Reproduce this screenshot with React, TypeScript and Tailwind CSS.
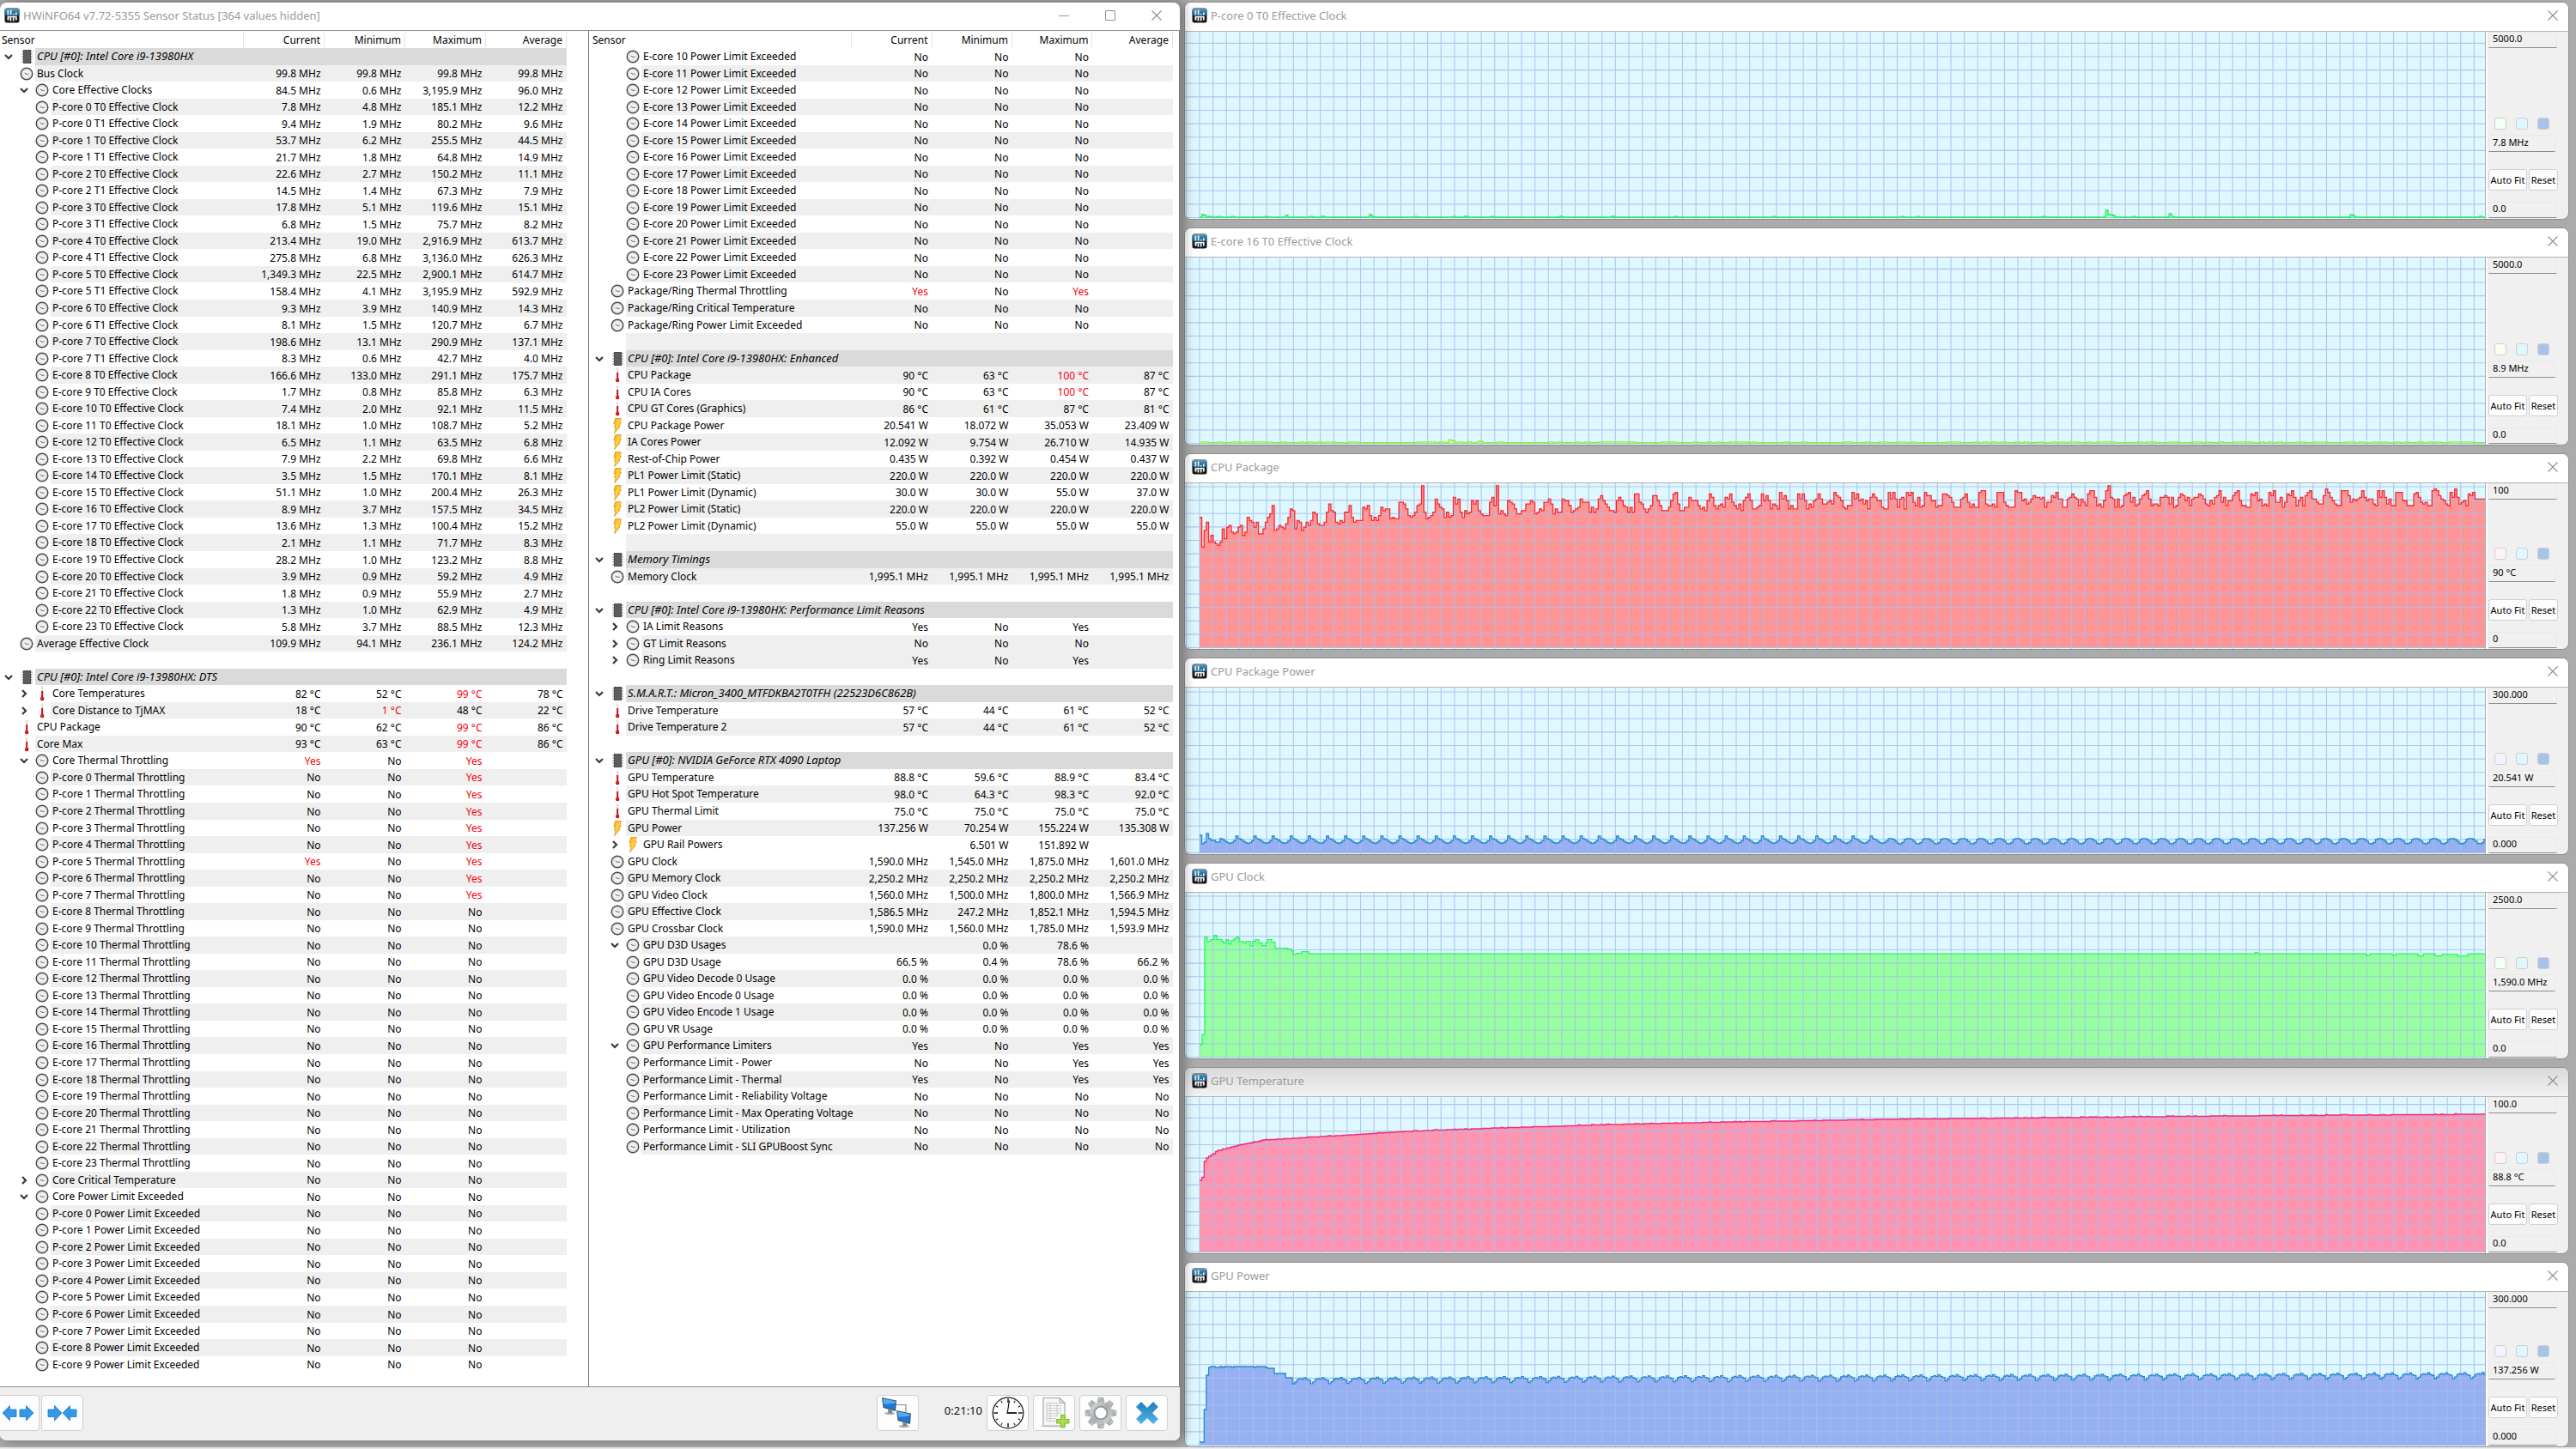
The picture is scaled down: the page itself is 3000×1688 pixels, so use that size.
import React from "react";

type Icon = "clock" | "temp" | "bolt";
type Row = {
  level: 0 | 1 | 2;
  label: string;
  values: string[];
  icon: Icon;
  header?: boolean;
  blank?: boolean;
  toggle?: "open" | "closed";
  hold?: boolean;
};

/* A leading "!" on a value marks it as an alert, drawn in red. */
const row = (level: 1 | 2, icon: Icon, label: string, values: string, extra: Partial<Row> = {}): Row => ({
  level,
  icon,
  label,
  values: values.split("|"),
  ...extra,
});
const head = (label: string): Row => ({ level: 0, icon: "clock", label, values: ["", "", "", ""], header: true, toggle: "open" });
const blank = (): Row => ({ level: 0, icon: "clock", label: "", values: ["", "", "", ""], blank: true });
const mhz = (s: string) => s.split(" ").map((v) => v + " MHz").join("|");

const coreNames = [
  ...Array.from({ length: 8 }, (_, i) => "P-core " + i),
  ...Array.from({ length: 16 }, (_, i) => "E-core " + (i + 8)),
];

const pClocks = [
  "7.8 4.8 185.1 12.2", "9.4 1.9 80.2 9.6", "53.7 6.2 255.5 44.5", "21.7 1.8 64.8 14.9",
  "22.6 2.7 150.2 11.1", "14.5 1.4 67.3 7.9", "17.8 5.1 119.6 15.1", "6.8 1.5 75.7 8.2",
  "213.4 19.0 2,916.9 613.7", "275.8 6.8 3,136.0 626.3", "1,349.3 22.5 2,900.1 614.7", "158.4 4.1 3,195.9 592.9",
  "9.3 3.9 140.9 14.3", "8.1 1.5 120.7 6.7", "198.6 13.1 290.9 137.1", "8.3 0.6 42.7 4.0",
];
const eClocks = [
  "166.6 133.0 291.1 175.7", "1.7 0.8 85.8 6.3", "7.4 2.0 92.1 11.5", "18.1 1.0 108.7 5.2",
  "6.5 1.1 63.5 6.8", "7.9 2.2 69.8 6.6", "3.5 1.5 170.1 8.1", "51.1 1.0 200.4 26.3",
  "8.9 3.7 157.5 34.5", "13.6 1.3 100.4 15.2", "2.1 1.1 71.7 8.3", "28.2 1.0 123.2 8.8",
  "3.9 0.9 59.2 4.9", "1.8 0.9 55.9 2.7", "1.3 1.0 62.9 4.9", "5.8 3.7 88.5 12.3",
];

const leftRows: Row[] = [
  head("CPU [#0]: Intel Core i9-13980HX"),
  row(1, "clock", "Bus Clock", mhz("99.8 99.8 99.8 99.8")),
  row(2, "clock", "Core Effective Clocks", mhz("84.5 0.6 3,195.9 96.0"), { toggle: "open" }),
  ...pClocks.map((v, i) => row(2, "clock", `P-core ${i >> 1} T${i % 2} Effective Clock`, mhz(v))),
  ...eClocks.map((v, i) => row(2, "clock", `E-core ${i + 8} T0 Effective Clock`, mhz(v))),
  row(1, "clock", "Average Effective Clock", mhz("109.9 94.1 236.1 124.2")),
  blank(),
  head("CPU [#0]: Intel Core i9-13980HX: DTS"),
  row(2, "temp", "Core Temperatures", "82 °C|52 °C|!99 °C|78 °C", { toggle: "closed" }),
  row(2, "temp", "Core Distance to TjMAX", "18 °C|!1 °C|48 °C|22 °C", { toggle: "closed" }),
  row(1, "temp", "CPU Package", "90 °C|62 °C|!99 °C|86 °C"),
  row(1, "temp", "Core Max", "93 °C|63 °C|!99 °C|86 °C"),
  row(2, "clock", "Core Thermal Throttling", "!Yes|No|!Yes|", { toggle: "open" }),
  ...coreNames.map((n, i) =>
    row(2, "clock", n + " Thermal Throttling", i === 5 ? "!Yes|No|!Yes|" : i < 8 ? "No|No|!Yes|" : "No|No|No|"),
  ),
  row(2, "clock", "Core Critical Temperature", "No|No|No|", { toggle: "closed" }),
  row(2, "clock", "Core Power Limit Exceeded", "No|No|No|", { toggle: "open" }),
  ...coreNames.slice(0, 10).map((n) => row(2, "clock", n + " Power Limit Exceeded", "No|No|No|")),
];

const rightRows: Row[] = [
  ...coreNames.slice(10).map((n) => row(2, "clock", n + " Power Limit Exceeded", "No|No|No|")),
  row(1, "clock", "Package/Ring Thermal Throttling", "!Yes|No|!Yes|"),
  row(1, "clock", "Package/Ring Critical Temperature", "No|No|No|"),
  row(1, "clock", "Package/Ring Power Limit Exceeded", "No|No|No|"),
  blank(),
  head("CPU [#0]: Intel Core i9-13980HX: Enhanced"),
  row(1, "temp", "CPU Package", "90 °C|63 °C|!100 °C|87 °C"),
  row(1, "temp", "CPU IA Cores", "90 °C|63 °C|!100 °C|87 °C"),
  row(1, "temp", "CPU GT Cores (Graphics)", "86 °C|61 °C|87 °C|81 °C"),
  row(1, "bolt", "CPU Package Power", "20.541 W|18.072 W|35.053 W|23.409 W"),
  row(1, "bolt", "IA Cores Power", "12.092 W|9.754 W|26.710 W|14.935 W"),
  row(1, "bolt", "Rest-of-Chip Power", "0.435 W|0.392 W|0.454 W|0.437 W"),
  row(1, "bolt", "PL1 Power Limit (Static)", "220.0 W|220.0 W|220.0 W|220.0 W"),
  row(1, "bolt", "PL1 Power Limit (Dynamic)", "30.0 W|30.0 W|55.0 W|37.0 W"),
  row(1, "bolt", "PL2 Power Limit (Static)", "220.0 W|220.0 W|220.0 W|220.0 W"),
  row(1, "bolt", "PL2 Power Limit (Dynamic)", "55.0 W|55.0 W|55.0 W|55.0 W"),
  blank(),
  head("Memory Timings"),
  row(1, "clock", "Memory Clock", mhz("1,995.1 1,995.1 1,995.1 1,995.1")),
  blank(),
  head("CPU [#0]: Intel Core i9-13980HX: Performance Limit Reasons"),
  row(2, "clock", "IA Limit Reasons", "Yes|No|Yes|", { toggle: "closed" }),
  row(2, "clock", "GT Limit Reasons", "No|No|No|", { toggle: "closed" }),
  row(2, "clock", "Ring Limit Reasons", "Yes|No|Yes|", { toggle: "closed", hold: true }),
  blank(),
  head("S.M.A.R.T.: Micron_3400_MTFDKBA2T0TFH (22523D6C862B)"),
  row(1, "temp", "Drive Temperature", "57 °C|44 °C|61 °C|52 °C"),
  row(1, "temp", "Drive Temperature 2", "57 °C|44 °C|61 °C|52 °C"),
  blank(),
  head("GPU [#0]: NVIDIA GeForce RTX 4090 Laptop"),
  row(1, "temp", "GPU Temperature", "88.8 °C|59.6 °C|88.9 °C|83.4 °C"),
  row(1, "temp", "GPU Hot Spot Temperature", "98.0 °C|64.3 °C|98.3 °C|92.0 °C"),
  row(1, "temp", "GPU Thermal Limit", "75.0 °C|75.0 °C|75.0 °C|75.0 °C"),
  row(1, "bolt", "GPU Power", "137.256 W|70.254 W|155.224 W|135.308 W"),
  row(2, "bolt", "GPU Rail Powers", "|6.501 W|151.892 W|", { toggle: "closed" }),
  row(1, "clock", "GPU Clock", mhz("1,590.0 1,545.0 1,875.0 1,601.0"), { hold: true }),
  row(1, "clock", "GPU Memory Clock", mhz("2,250.2 2,250.2 2,250.2 2,250.2")),
  row(1, "clock", "GPU Video Clock", mhz("1,560.0 1,500.0 1,800.0 1,566.9")),
  row(1, "clock", "GPU Effective Clock", mhz("1,586.5 247.2 1,852.1 1,594.5")),
  row(1, "clock", "GPU Crossbar Clock", mhz("1,590.0 1,560.0 1,785.0 1,593.9")),
  row(2, "clock", "GPU D3D Usages", "|0.0 %|78.6 %|", { toggle: "open" }),
  row(2, "clock", "GPU D3D Usage", "66.5 %|0.4 %|78.6 %|66.2 %"),
  row(2, "clock", "GPU Video Decode 0 Usage", "0.0 %|0.0 %|0.0 %|0.0 %"),
  row(2, "clock", "GPU Video Encode 0 Usage", "0.0 %|0.0 %|0.0 %|0.0 %"),
  row(2, "clock", "GPU Video Encode 1 Usage", "0.0 %|0.0 %|0.0 %|0.0 %"),
  row(2, "clock", "GPU VR Usage", "0.0 %|0.0 %|0.0 %|0.0 %"),
  row(2, "clock", "GPU Performance Limiters", "Yes|No|Yes|Yes", { toggle: "open" }),
  row(2, "clock", "Performance Limit - Power", "No|No|Yes|Yes"),
  row(2, "clock", "Performance Limit - Thermal", "Yes|No|Yes|Yes"),
  row(2, "clock", "Performance Limit - Reliability Voltage", "No|No|No|No"),
  row(2, "clock", "Performance Limit - Max Operating Voltage", "No|No|No|No"),
  row(2, "clock", "Performance Limit - Utilization", "No|No|No|No"),
  row(2, "clock", "Performance Limit - SLI GPUBoost Sync", "No|No|No|No"),
];

/* ---------- small icons ---------- */

function AppIcon() {
  return (
    <svg viewBox="0 0 18 18" className="size-[18px] shrink-0" aria-hidden="true">
      <defs>
        <linearGradient id="appTop" x1="0" y1="0" x2="0" y2="1">
          <stop offset="0" stopColor="#7f99a6" />
          <stop offset="0.5" stopColor="#2c7ba6" />
          <stop offset="1" stopColor="#0c5f93" />
        </linearGradient>
      </defs>
      <rect x="0.5" y="0.5" width="17" height="17" rx="2.5" fill="#15181b" />
      <path d="M0.5 9V3a2.5 2.5 0 0 1 2.5-2.5h12A2.5 2.5 0 0 1 17.500 3v6z" fill="url(#appTop)" />
      <path d="M3.500 3h1.700v5.500H3.500zM6.800 2.500h1.700v6H6.800zM10 7h1.700v1.500H10zM13 5.500h1.700v3H13z" fill="#e6f2f8" />
      <path d="M3.500 9.700h11.200v1.500H3.500zM3.500 11h2v3.500h-2zM6.600 11h1.700v4.500H6.600zM9.800 11h1.700v4.500H9.800zM12.900 11h1.800v3.500h-1.800z" fill="#f6f6f6" />
    </svg>
  );
}

function ClockIcon() {
  return (
    <svg viewBox="0 0 16 16" className="size-4 shrink-0" aria-hidden="true">
      <circle cx="8" cy="8" r="6.800" fill="#f1f1f1" stroke="#4a4a4a" strokeWidth="1.400" />
      <circle cx="8" cy="8" r="5.400" fill="none" stroke="#c9c9c9" strokeWidth="0.900" />
      <path d="M8.300 8.500 5.600 7M8 8.300h2.600" stroke="#6b5a5a" strokeWidth="0.900" fill="none" />
    </svg>
  );
}

function TempIcon() {
  return (
    <svg viewBox="0 0 16 18" className="h-[18px] w-4 shrink-0" aria-hidden="true">
      <rect x="6.900" y="0.500" width="2.400" height="14" rx="1.200" fill="#dedede" />
      <rect x="7.200" y="6" width="1.900" height="9" fill="#c80f14" />
      <circle cx="8.100" cy="15" r="2.300" fill="#c80f14" />
      <circle cx="7.500" cy="14.500" r="0.700" fill="#ee7a7a" />
    </svg>
  );
}

function BoltIcon() {
  return (
    <svg viewBox="0 0 16 18" className="h-[18px] w-4 shrink-0" aria-hidden="true">
      <defs>
        <linearGradient id="bolt" x1="0" y1="0" x2="1" y2="1">
          <stop offset="0" stopColor="#ff9f10" />
          <stop offset="0.500" stopColor="#ffd83a" />
          <stop offset="1" stopColor="#f08c0a" />
        </linearGradient>
      </defs>
      <path d="M5.600 0.600h6.800l-1.600 4.600 1.500 0.300-2.500 4.200 1.100 0.300L4.600 17.700l1.500-6.200-1.600-0.300 1.100-4-1.700-0.400z" fill="url(#bolt)" stroke="#dd7f14" strokeWidth="0.700" />
    </svg>
  );
}

function ChipIcon() {
  return (
    <svg viewBox="0 0 16 18" className="h-[18px] w-4 shrink-0" aria-hidden="true">
      <path d="M2.500 3h12M2.500 6h12M2.500 9h12M2.500 12h12M2.500 15h12" stroke="#8d8d8d" strokeWidth="1.300" />
      <rect x="4" y="1" width="9" height="16" fill="#4e4e4e" />
      <rect x="5" y="2" width="7" height="14" fill="#5d5d5d" />
    </svg>
  );
}

function Chevron({ kind }: { kind: "open" | "closed" }) {
  return (
    <svg viewBox="0 0 10 10" className="size-2.5" aria-hidden="true">
      <path d={kind === "open" ? "M1 3l4 4 4-4" : "M3 1l4 4-4 4"} fill="none" stroke="#3a3a3a" strokeWidth="2.200" />
    </svg>
  );
}

function CloseGlyph() {
  return (
    <svg viewBox="0 0 12 12" className="size-3" aria-hidden="true">
      <path d="M0.500 0.500l11 11M11.500 0.500l-11 11" stroke="#8f8f8f" strokeWidth="1.100" fill="none" />
    </svg>
  );
}

/* ---------- sensor tables ---------- */

const lineIcon = { clock: <ClockIcon />, temp: <TempIcon />, bolt: <BoltIcon /> };

function SensorTable({ rows, wide, name }: { rows: Row[]; wide: boolean; name: string }) {
  let shaded = true;
  return (
    <table aria-label={name} className="w-full table-fixed border-collapse text-xs leading-[19px] text-black">
      <colgroup>
        <col className={wide ? "w-[43%]" : "w-[44.8%]"} />
        <col />
        <col />
        <col />
        <col />
      </colgroup>
      <thead>
        <tr className="h-5">
          <th scope="col" className="border-r border-[#e4e4e4] p-0 pl-0.5 text-left font-normal">
            Sensor
          </th>
          {["Current", "Minimum", "Maximum", "Average"].map((c) => (
            <th key={c} scope="col" className="border-r border-[#e4e4e4] p-0 pr-1 text-right font-normal">
              {c}
            </th>
          ))}
        </tr>
      </thead>
      <tbody>
        {rows.map((r, i) => {
          if (!r.hold) shaded = !shaded;
          const bg = r.header ? "bg-[#dadada]" : shaded ? "bg-[#efefef]" : "bg-white";
          const h = (i % 15) % 2 === 0 ? "h-5" : "h-[19px]";
          return (
            <tr key={i} className={h}>
              <td className="p-0">
                <div className={`flex items-center ${h}`}>
                  <div className={`flex shrink-0 items-center ${r.level === 2 ? "w-[59px] pl-[23px]" : "w-[41px] pl-[5px]"}`}>
                    <span className="mr-2 flex w-2.5 shrink-0">
                      {r.toggle && (
                        <button type="button" className="flex" aria-label={(r.toggle === "open" ? "Collapse " : "Expand ") + r.label}>
                          <Chevron kind={r.toggle} />
                        </button>
                      )}
                    </span>
                    {r.header ? <ChipIcon /> : r.blank ? null : lineIcon[r.icon]}
                  </div>
                  <div className={`min-w-0 flex-1 whitespace-nowrap pl-0.5 ${h} ${bg} ${r.header ? "text-[13px] italic" : ""}`}>{r.label}</div>
                </div>
              </td>
              {r.values.map((v, c) => (
                <td key={c} className={`whitespace-nowrap p-0 pr-1 text-right ${bg} ${v[0] === "!" ? "text-[#f5000c]" : ""}`}>
                  {v.replace("!", "")}
                </td>
              ))}
            </tr>
          );
        })}
      </tbody>
    </table>
  );
}

/* ---------- toolbar ---------- */

function ToolButton({ label, children, wide }: { label: string; children: React.ReactNode; wide?: boolean }) {
  return (
    <button
      type="button"
      aria-label={label}
      className={`flex h-[42px] items-center justify-center border border-[#d0d0d0] bg-[#fdfdfd] ${wide ? "w-[46px] rounded-r border-l-0 pr-1" : "w-[49px] rounded"}`}
    >
      {children}
    </button>
  );
}

const arrowLeft = "M1 10 9.500 1.500V6H17v8.500H9.500V19z";
const arrowRight = "M19 10 10.500 1.500V6H3v8.500h7.500V19z";

function Arrows({ outward }: { outward: boolean }) {
  return (
    <svg viewBox="0 0 38 20" className="h-5 w-[38px]" aria-hidden="true">
      <g fill="#3498e8" stroke="#1c7bca" strokeWidth="0.800">
        <path d={outward ? arrowLeft : arrowRight} transform={outward ? "translate(0 0)" : "translate(-1 0)"} />
        <path d={outward ? arrowRight : arrowLeft} transform="translate(18 0)" />
      </g>
    </svg>
  );
}

function Monitor({ x, y }: { x: number; y: number }) {
  return (
    <g transform={`translate(${x} ${y})`}>
      <ellipse cx="9" cy="18.500" rx="6" ry="1.800" fill="#b5b9bd" />
      <path d="M7 14l5 1 .5 3.500H7.500z" fill="#7f858a" />
      <path d="M0 0 17 3.500 16 16 1.500 12z" fill="#44525f" />
      <path d="M1.200 1.300 15.800 4.300 15 14.500 2.500 11z" fill="#1b78d8" />
      <path d="M1.200 1.300 15.800 4.300 15.600 6.500 2 8z" fill="#56a8f0" />
    </g>
  );
}

function NetworkIcon() {
  return (
    <svg viewBox="0 0 38 38" className="size-[38px]" aria-hidden="true">
      <path d="M17 9.500h12V18" fill="none" stroke="#8a8a8a" strokeWidth="1.200" />
      <Monitor x={1} y={1} />
      <Monitor x={18} y={16} />
    </svg>
  );
}

function WallClockIcon() {
  return (
    <svg viewBox="0 0 38 38" className="size-[38px]" aria-hidden="true">
      <circle cx="19" cy="19" r="17.800" fill="#fff" stroke="#222" strokeWidth="1.300" />
      {Array.from({ length: 12 }, (_, i) => (
        <path key={i} d={i % 3 === 0 ? "M19 2.500v4.500" : "M19 2.500v3"} stroke="#111" strokeWidth={i % 3 === 0 ? 1.500 : 1} transform={`rotate(${i * 30} 19 19)`} />
      ))}
      <path d="M18 20 20.500 4.500" stroke="#111" strokeWidth="1.200" />
      <path d="M18 19h11" stroke="#111" strokeWidth="1.800" />
    </svg>
  );
}

function ReportIcon() {
  return (
    <svg viewBox="0 0 38 38" className="size-[38px]" aria-hidden="true">
      <ellipse cx="18" cy="34.500" rx="16" ry="1.500" fill="#e2e2e2" />
      <path d="M6 1.500h19l6 6V34H6z" fill="#f7f7f7" stroke="#a2a2a2" strokeWidth="1.100" />
      <path d="M25 1.500v6h6z" fill="#e2e2e2" stroke="#a2a2a2" strokeWidth="0.900" />
      <path d="M10 7.500h12M10 10.500h17M10 13.500h17M10 16.500h17M10 19.500h17M10 22.500h13M10 25.500h11M10 28.500h11M10 7.500v21M14 7.500v21M22 7.500v15" stroke="#c6c6c6" strokeWidth="0.900" fill="none" />
      <path d="M26.500 21.500h4.500v5h5v4.500h-5v5h-4.500v-5h-5v-4.500h5z" fill="#a8dc4e" stroke="#7fb62c" strokeWidth="1" />
    </svg>
  );
}

function GearIcon() {
  return (
    <svg viewBox="0 0 38 38" className="size-[38px]" aria-hidden="true">
      <defs>
        <linearGradient id="gear" x1="0" y1="0" x2="1" y2="1">
          <stop offset="0" stopColor="#dfe1e2" />
          <stop offset="0.500" stopColor="#a9adaf" />
          <stop offset="1" stopColor="#d9dbdc" />
        </linearGradient>
      </defs>
      <g fill="url(#gear)" stroke="#8f9396" strokeWidth="0.700">
        {Array.from({ length: 8 }, (_, i) => (
          <path key={i} d="M14.800 8.500 16.200 1.200h5.600L23.200 8.500z" transform={`rotate(${i * 45} 19 19)`} />
        ))}
      </g>
      <circle cx="19" cy="19" r="12.800" fill="url(#gear)" />
      <circle cx="19" cy="19" r="8" fill="#8d9193" />
      <circle cx="19" cy="19" r="6.500" fill="#fdfdfd" />
    </svg>
  );
}

function BigCross() {
  return (
    <svg viewBox="0 0 28 28" className="size-7" aria-hidden="true">
      <defs>
        <linearGradient id="cross" x1="0" y1="0" x2="0" y2="1">
          <stop offset="0" stopColor="#1c7fb8" />
          <stop offset="1" stopColor="#54b4ec" />
        </linearGradient>
      </defs>
      <path d="M7 1l7 7 7-7 6 6-7 7 7 7-6 6-7-7-7 7-6-6 7-7-7-7z" fill="url(#cross)" />
    </svg>
  );
}

/* ---------- graph windows ---------- */

/* Series are step samples in a 1498-unit wide strip; heights use the strip's own scale. */
const STRIP = 1498;
type Point = [number, number];

const noise = (n: number) => {
  const s = Math.sin(n * 127.1 + 11.7) * 43758.5453;
  return s - Math.floor(s);
};
const lerp = (pts: Point[], x: number) => {
  for (let i = 1; i < pts.length; i++) {
    if (x <= pts[i][0]) {
      const [x0, y0] = pts[i - 1];
      const [x1, y1] = pts[i];
      return y0 + ((y1 - y0) * (x - x0)) / (x1 - x0);
    }
  }
  return pts[pts.length - 1][1];
};
const sample = (f: (x: number, i: number) => number, step = 2.64): Point[] =>
  Array.from({ length: Math.ceil(STRIP / step) }, (_, i) => [i * step, f(i * step, i)] as Point);

const pCore = sample((x, i) => {
  const spikes: Point[] = [[3, 4], [6, 3], [100, 3], [142, 2], [198, 4], [201, 2], [310, 2], [420, 2], [480, 2], [1055, 9], [1060, 4], [1063, 3], [1130, 5], [1342, 4], [1344, 3], [1491, 2]];
  const hit = spikes.find((s) => Math.abs(s[0] - x) < 1.5);
  return hit ? hit[1] : noise(i) > 0.98 ? 1.800 : 1;
});
const eCore = sample((x, i) => (x > 290 && x < 298 ? 5 - (x - 290) / 3 : x > 324 && x < 329 ? 3 : noise(i >> 1) > 0.600 ? 2.200 : 1.400));

const cpuLead = [79, 61, 71, 76, 64, 68, 64, 63, 62, 64, 72, 66, 73, 74, 70, 69, 70, 73, 74, 68, 70, 79, 77, 76, 73, 76, 69, 69, 72, 76, 79, 81, 86, 71, 72, 74, 73, 72, 75, 79, 84, 83, 72, 77, 76, 71, 73, 76, 74, 77, 82, 81, 75, 74, 74, 76];
const cpuTemp = sample((x, i) => {
  if (i < cpuLead.length) return cpuLead[i];
  const base = lerp([[140, 74.500], [380, 81], [700, 84], [1498, 86]], x);
  const peak = lerp([[140, 87], [300, 91], [700, 95], [1498, 96]], x);
  const phase = (i % 8) / 8;
  const n = noise(i);
  const crest = phase < 0.375 ? 0.500 + n * 0.500 : phase < 0.500 ? 0.250 + n * 0.400 : n * n * (x > 700 ? 0.600 : 0.350);
  const v = base + (peak - base) * crest;
  if (i === 98 || i === 131 || i === 401) return 98;
  return i > 562 ? 90 : Math.round(v);
});
const cpuPower = sample((x, i) => {
  const early = [21, 11, 13, 23, 17, 15, 15, 13, 13];
  if (i < early.length) return early[i];
  const wave = [20, 17, 16, 14, 12.500, 11.500, 12.500, 14.500];
  const late = [17, 17, 16, 14, 11.500, 11, 12.500, 16];
  return (x < 800 ? wave : late)[i % 8];
});
const clockPts: Point[] = [
  [0, 15], [3, 27], [6, 141], [9, 136], [13, 138], [17, 143], [20, 138], [26, 136], [28, 134], [31, 138], [34, 133], [37, 137], [40, 139], [43, 141],
  [46, 136], [51, 134], [54, 136], [59, 131], [62, 136], [65, 138], [69, 134], [73, 131], [77, 134], [79, 138], [84, 135], [88, 128],
  [95, 128], [103, 127], [107, 125], [109, 121], [114, 122], [119, 124], [127, 121.500], [1230, 123], [1233, 121.500], [1360, 119.500],
  [1364, 121.500], [1390, 119.500], [1394, 121.500], [1420, 119], [1426, 121.500], [1440, 119], [1448, 121], [1466, 119], [1478, 121.500],
];
const gpuTemp = sample((x, i) => {
  const v = lerp([[0, 84], [3, 88], [4, 104], [8, 110], [20, 118], [45, 125], [75, 131], [110, 133], [160, 136], [240, 141], [350, 145], [480, 149], [620, 152], [800, 155], [1000, 157], [1200, 159], [1498, 161]], x);
  return Math.round(v * 2 + (noise(i) > 0.850 ? 1 : 0)) / 2;
});
const gpuPower = sample((x, i) => {
  if (x < 4) return 4;
  if (x < 6) return 42;
  if (x < 9) return 82;
  if (x < 79) return noise(i) > 0.850 ? 91 : 92;
  if (x < 87) return 90;
  if (x < 100) return 84;
  if (x < 107) return 79;
  const wave = [-1, -5, -3, 0, 1, 0, 2, 0];
  return lerp([[107, 77], [500, 79], [1498, 83]], x) + wave[i % 8];
});

type Graph = { title: string; max: string; value: string; min: string; scale: number; data: Point[]; line: string; fill: string; tint: string; dim?: boolean };
const graphs: Graph[] = [
  { title: "P-core 0 T0 Effective Clock", max: "5000.0", value: "7.8 MHz", min: "0.0", scale: 218, data: pCore, line: "#1cf05a", fill: "#96ffb0", tint: "bg-[#f1fff4]" },
  { title: "E-core 16 T0 Effective Clock", max: "5000.0", value: "8.9 MHz", min: "0.0", scale: 218, data: eCore, line: "#8cf52a", fill: "#c8ff96", tint: "bg-[#f8fff1]" },
  { title: "CPU Package", max: "100", value: "90 °C", min: "0", scale: 100, data: cpuTemp, line: "#fb2a2e", fill: "#ff9494", tint: "bg-[#fff2f2]" },
  { title: "CPU Package Power", max: "300.000", value: "20.541 W", min: "0.000", scale: 194, data: cpuPower, line: "#2a8bd0", fill: "#96b0f2", tint: "bg-[#f1f4fe]" },
  { title: "GPU Clock", max: "2500.0", value: "1,590.0 MHz", min: "0.0", scale: 194, data: clockPts, line: "#1ffb5c", fill: "#96ffa0", tint: "bg-[#f1fff4]" },
  { title: "GPU Temperature", max: "100.0", value: "88.8 °C", min: "0.0", scale: 182, data: gpuTemp, line: "#ee2f7c", fill: "#ff94b0", tint: "bg-[#fff1f5]", dim: true },
  { title: "GPU Power", max: "300.000", value: "137.256 W", min: "0.000", scale: 180, data: gpuPower, line: "#2a8bd0", fill: "#96b0f2", tint: "bg-[#f1f4fe]" },
];

const CELL = 15.625;
const gridPath = (() => {
  let d = "";
  for (let i = 0; i < 260; i++) d += `M${(17 + i * CELL).toFixed(3)} 0V-1200`;
  for (let i = 0; i < 80; i++) d += `M0 ${(-1.5 - i * CELL).toFixed(3)}H4000`;
  return d + "M1.400 0V-1200";
})();

function Plot({ graph }: { graph: Graph }) {
  const y = (v: number) => (graph.scale - v).toFixed(2);
  const steps = graph.data.map(([x, v], i) => (i === 0 ? `M${x} ${y(v)}` : `H${x.toFixed(1)}V${y(v)}`)).join("") + `H${STRIP}`;
  const box = `0 0 ${STRIP} ${graph.scale}`;
  const layer = "absolute bottom-px left-[17px] h-full w-[calc(100%-17px)]";
  return (
    <div role="img" aria-label={graph.title + " history"} className="relative min-w-0 flex-1 overflow-hidden border-r border-[#a9b4ba] bg-[#dff7fe]">
      <svg viewBox={box} preserveAspectRatio="none" className={layer}>
        <path d={`${steps}V${graph.scale}H0z`} fill={graph.fill} />
      </svg>
      <svg className="absolute inset-0 size-full">
        <svg y="100%" overflow="visible">
          <path d={gridPath} stroke="#a6c0ea" strokeOpacity="0.850" strokeWidth="1.100" fill="none" />
        </svg>
      </svg>
      <svg viewBox={box} preserveAspectRatio="none" className={layer}>
        <path d={steps} fill="none" stroke={graph.line} strokeWidth="1.300" vectorEffect="non-scaling-stroke" />
      </svg>
    </div>
  );
}

const fieldLook = "border border-[#e9e9e9] border-b-[#8c8c8c] bg-[#f0f0f0] pb-1 pl-1 text-[11px] leading-4 text-black";

function GraphWindow({ graph }: { graph: Graph }) {
  return (
    <section aria-label={graph.title} className="flex min-h-0 flex-col overflow-hidden rounded-lg border border-[#8e8e8e] bg-[#f0f0f0]">
      <header
        className={`flex h-[34px] shrink-0 items-center gap-1 border-b border-[#b4b4b4] pb-1 pl-2 pr-3 ${graph.dim ? "bg-linear-to-b from-[#dadada] to-[#f2f2f2]" : "bg-white"}`}
      >
        <AppIcon />
        <h2 className="flex-1 text-[13px] leading-5 text-[#9a9a9a]">{graph.title}</h2>
        <button type="button" aria-label={"Close " + graph.title} className="flex">
          <CloseGlyph />
        </button>
      </header>
      <div className="flex min-h-0 flex-1">
        <Plot graph={graph} />
        <div className="flex w-24 shrink-0 flex-col border-l-2 border-[#fafafa] pb-px pl-px">
          <input aria-label="Maximum" defaultValue={graph.max} className={`h-[19px] w-20 ${fieldLook}`} />
          <div className="mb-1.5 mt-auto flex gap-[11px] pl-[7px]">
            <button type="button" aria-label="Line colour" className={`size-3.5 rounded-[3px] border border-[#cfcfcf] ${graph.tint}`} />
            <button type="button" aria-label="Background colour" className="size-3.5 rounded-[3px] border border-[#cfcfcf] bg-[#dff7fe]" />
            <button type="button" aria-label="Grid colour" className="size-3.5 rounded-[3px] border border-[#cfcfcf] bg-[#a9c3e8]" />
          </div>
          <input aria-label="Current value" readOnly defaultValue={graph.value} className={`mb-5 h-5 w-[78px] ${fieldLook}`} />
          <div className="mb-[13px] flex gap-0.5 text-[11px] leading-4 text-black">
            <button type="button" className="h-[25px] w-[45px] rounded-[3px] border border-[#d0d0d0] bg-[#fdfdfd]">
              Auto Fit
            </button>
            <button type="button" className="h-[25px] w-[34px] rounded-[3px] border border-[#d0d0d0] bg-[#fdfdfd]">
              Reset
            </button>
          </div>
          <input aria-label="Minimum" defaultValue={graph.min} className={`h-[19px] w-20 ${fieldLook}`} />
        </div>
      </div>
    </section>
  );
}

export default function App() {
  return (
    <div className="flex h-screen flex-col bg-[#ababab] font-['Noto_Sans',sans-serif]">
      <main className="grid min-h-0 flex-1 grid-cols-[1375fr_1613fr] grid-rows-[minmax(0,1fr)] gap-1 pr-2 pt-0.5">
        <section
          aria-label="Sensor Status"
          className="relative z-10 mb-[7px] flex min-w-0 flex-col overflow-hidden rounded-lg border-b border-r border-t border-[#8e8e8e] bg-white shadow-[4px_0_14px_rgba(0,0,0,0.35)]"
        >
          <header className="flex h-[33px] shrink-0 items-center border-b border-[#8d9095] pb-0.5 pl-[5px] pr-[21px]">
            <AppIcon />
            <h1 className="flex-1 pl-1 text-[13px] leading-5 text-[#9a9a9a]">HWiNFO64 v7.72-5355 Sensor Status [364 values hidden]</h1>
            <div className="flex gap-[42px]">
              <button type="button" aria-label="Minimize" className="flex size-3 items-center">
                <span className="h-px w-3 bg-[#9a9a9a]" />
              </button>
              <button type="button" aria-label="Maximize" className="size-3 rounded-[1px] border border-[#8f8f8f]" />
              <button type="button" aria-label="Close" className="flex">
                <CloseGlyph />
              </button>
            </div>
          </header>
          <div className="grid min-h-0 flex-1 grid-cols-[686fr_688fr] overflow-hidden">
            <div className="min-w-0 border-r border-[#70747a] pr-[25px]">
              <SensorTable rows={leftRows} wide name="CPU sensors" />
            </div>
            <div className="min-w-0 border-r border-[#70747a] pl-0.5 pr-[7px]">
              <SensorTable rows={rightRows} wide={false} name="Package, memory, drive and GPU sensors" />
            </div>
          </div>
          <footer className="flex h-[63px] shrink-0 items-start border-t border-[#8d9095] bg-[#efefef] pr-3.5 pt-[9px]">
            <div className="flex gap-0.5">
              <ToolButton label="Expand columns" wide>
                <Arrows outward />
              </ToolButton>
              <ToolButton label="Shrink columns">
                <Arrows outward={false} />
              </ToolButton>
            </div>
            <div className="ml-auto flex items-center gap-[5px]">
              <ToolButton label="Remote monitoring">
                <NetworkIcon />
              </ToolButton>
              <time className="pb-1.5 pl-[25px] text-[13px] leading-5 text-[#111]">0:21:10</time>
              <ToolButton label="Reset clock">
                <WallClockIcon />
              </ToolButton>
              <ToolButton label="Start logging">
                <ReportIcon />
              </ToolButton>
              <ToolButton label="Settings">
                <GearIcon />
              </ToolButton>
              <ToolButton label="Close sensors">
                <BigCross />
              </ToolButton>
            </div>
          </footer>
        </section>
        <div className="grid min-w-0 grid-rows-[254fr_254fr_229fr_230fr_229fr_218fr_216fr] gap-[9px]">
          {graphs.map((g) => (
            <GraphWindow key={g.title} graph={g} />
          ))}
        </div>
      </main>
      <div className="h-0.5 shrink-0 bg-[#eeeeee]" />
    </div>
  );
}
